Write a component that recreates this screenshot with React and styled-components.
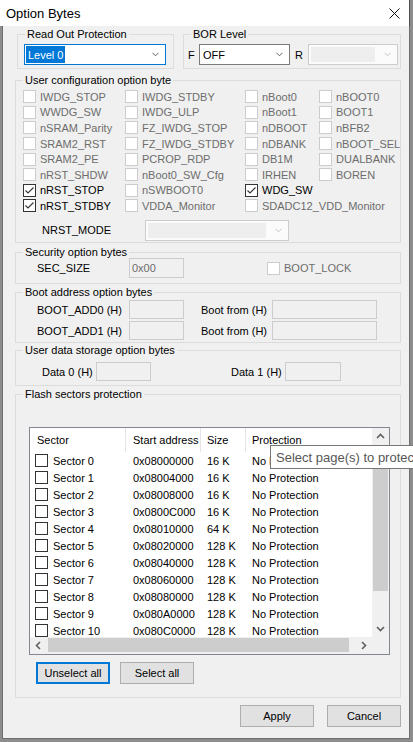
import React from 'react';
import styled, { createGlobalStyle } from 'styled-components';

const Global = createGlobalStyle`
  html, body { margin: 0; padding: 0; overflow: hidden; background: #8a8a8a; }
  body { font-family: "Liberation Sans", Arial, sans-serif; font-size: 11px; color: #000; }
  * { box-sizing: border-box; }
`;

const Frame = styled.div`
  width: 413px; height: 742px; overflow: hidden; position: relative;
  background: #8d8d8d;
  display: flex; flex-direction: column;
`;

const TitleBar = styled.div`
  width: 410px; height: 26px; flex: none;
  background: #fff;
  border-right: 1px solid #4d4d4d;
  display: flex; align-items: center; justify-content: space-between;
  padding: 0 9px 0 6px;
  font-size: 13px;
`;

const Window = styled.div`
  margin-left: 2px; width: 408px; height: 713px; flex: none;
  background: #f0f0f0;
  border: 1px solid #6e6e6e; border-top: none;
  padding: 2px 8px 0 12px;
  display: flex; flex-direction: column;
`;

const Group = styled.fieldset`
  margin: ${p => p.$mt || 0}px 0 0 ${p => (p.$ml === 'auto' ? 'auto' : `${p.$ml || 0}px`)};
  padding: 0;
  border: 1px solid #dcdcdc;
  height: ${p => p.$h}px;
  width: ${p => (p.$w ? `${p.$w}px` : 'auto')};
  min-width: 0;
  flex: none;
`;

const Caption = styled.legend`
  margin-left: 7px; padding: 0 2px; line-height: 12px; font-size: 11px; color: #000;
`;

const TopRow = styled.div`
  display: flex; align-items: flex-start;
`;

const Row = styled.div`
  display: flex; align-items: center;
  margin: ${p => p.$mt || 0}px 0 0 ${p => p.$ml || 0}px;
  height: ${p => p.$h || 21}px;
`;

const Label = styled.span`
  width: ${p => p.$w}px; flex: none; white-space: nowrap;
  margin-left: ${p => p.$ml || 0}px;
  color: ${p => (p.$disabled ? '#6d6d6d' : '#000')};
`;

const ComboBox = styled.div`
  width: ${p => p.$w}px; height: 21px; flex: none;
  display: flex; align-items: center;
  background: ${p => (p.$disabled ? '#fbfbfb' : '#fff')};
  border: 1px solid ${p => (p.$focus ? '#0078d7' : p.$disabled ? '#cccccc' : '#7a7a7a')};
  padding: 1px 6px 1px 1px;
`;

const ComboValue = styled.span`
  height: 17px; display: flex; align-items: center; padding: 0 2px;
  background: ${p => (p.$selected ? '#0078d7' : 'transparent')};
  color: ${p => (p.$selected ? '#fff' : '#000')};
  margin-right: auto;
`;

const ComboField = styled.span`
  align-self: stretch; flex: 1; margin: 1px 9px 1px 1px; background: #eeeeee;
`;

const Chevron = ({ color = '#555' }) => (
  <svg width="7" height="5" viewBox="0 0 7 5" style={{ flex: 'none' }}>
    <polyline points="0.5,0.8 3.5,3.8 6.5,0.8" fill="none" stroke={color} strokeWidth="1" />
  </svg>
);

const Combo = ({ w, value, focus, selected, disabled }) => (
  <ComboBox $w={w} $focus={focus} $disabled={disabled}>
    {disabled ? <ComboField /> : <ComboValue $selected={selected}>{value}</ComboValue>}
    <Chevron color={disabled ? '#c4c4c4' : '#606060'} />
  </ComboBox>
);

const Box = styled.span`
  width: 13px; height: 13px; flex: none;
  border: 1px solid ${p => (p.$disabled ? '#cccccc' : '#333333')};
  background: #fff;
  display: flex; align-items: center; justify-content: center;
`;

const Check = ({ checked, disabled }) => (
  <Box $disabled={disabled}>
    {checked && (
      <svg width="11" height="11" viewBox="0 0 11 11">
        <polyline points="1.5,5.5 4,8 9.5,2.5" fill="none" stroke="#333" strokeWidth="1.1" />
      </svg>
    )}
  </Box>
);

const CheckItem = styled.label`
  display: flex; align-items: center; gap: 4px; white-space: nowrap;
  margin-left: ${p => p.$ml || 0}px;
  color: ${p => (p.$disabled ? '#6d6d6d' : '#000')};
`;

const OptionGrid = styled.div`
  display: grid;
  grid-template-columns: 102px 120px 74px 1fr;
  grid-template-rows: repeat(8, 15.6px);
  grid-auto-flow: column;
  align-items: center;
  margin: 3px 0 0 7px;
`;

const TextBox = styled.div`
  width: ${p => p.$w}px; height: ${p => p.$h || 19}px; flex: none;
  border: 1px solid #cccccc; background: #f0f0f0; color: #6d6d6d;
  padding-left: 2px; display: flex; align-items: center;
`;

const FieldRows = styled.div`
  display: flex; flex-direction: column; gap: 2px; margin-top: 2px;
`;

const ListBox = styled.div`
  position: relative;
  margin: 27px 0 0 13px;
  width: 361px; height: 228px;
  border: 1px solid #828790;
  background: #fff;
  display: grid;
  grid-template-columns: 1fr 17px;
  grid-template-rows: 1fr 17px;
`;

const ListContent = styled.div`
  overflow: hidden; display: flex; flex-direction: column;
`;

const HeaderRow = styled.div`
  display: grid; grid-template-columns: 96px 75px 45px 1fr; height: 24px; flex: none;
`;

const HeadCell = styled.div`
  display: flex; align-items: center; padding-left: ${p => p.$pl || 6}px;
  border-right: ${p => (p.$last ? 'none' : '1px solid #e5e5e5')};
  white-space: nowrap;
`;

const Rows = styled.div`
  flex: 1; overflow: hidden;
`;

const SectorRow = styled.div`
  display: grid; grid-template-columns: 96px 75px 45px 1fr; height: 17px;
  align-items: center; white-space: nowrap;
`;

const Cell = styled.div`
  display: flex; align-items: center; gap: 5px; padding-left: ${p => p.$pl || 6}px;
`;

const VScroll = styled.div`
  background: #f0f0f0; display: flex; flex-direction: column;
`;

const HScroll = styled.div`
  background: #f0f0f0; display: flex; align-items: center;
`;

const ScrollBtn = styled.div`
  width: 17px; height: 17px; flex: none;
  display: flex; align-items: center; justify-content: center;
`;

const Track = styled.div`
  flex: 1; display: flex; flex-direction: ${p => (p.$vertical ? 'column' : 'row')};
  align-self: stretch;
`;

const Thumb = styled.div`
  background: #cdcdcd;
  ${p => (p.$vertical
    ? `height: ${p.$size}px; margin: 0 1px;`
    : `width: ${p.$size}px; margin: 1px 0 2px 1px;`)}
`;

const Corner = styled.div`
  background: #f0f0f0;
`;

const Arrow = ({ dir }) => {
  const rot = { up: 0, down: 180, left: 270, right: 90 }[dir];
  return (
    <svg width="9" height="9" viewBox="0 0 9 9" style={{ transform: `rotate(${rot}deg)` }}>
      <polyline points="1,6 4.5,2.5 8,6" fill="none" stroke="#606060" strokeWidth="1.6" />
    </svg>
  );
};

const Tooltip = styled.div`
  position: absolute; left: 240px; top: 17px; z-index: 2;
  width: 170px; height: 24px;
  border: 1px solid #767676; background: #fff;
  color: #575757; font-size: 13px;
  display: flex; align-items: center; padding-left: 5px; white-space: nowrap;
`;

const Button = styled.button`
  width: 74px; height: 22px; flex: none; margin: 0;
  font-family: "Liberation Sans", Arial, sans-serif; font-size: 11px; color: #000;
  background: #e1e1e1;
  border: ${p => (p.$focus ? '2px solid #0078d7' : '1px solid #adadad')};
  padding: 0;
`;

const ButtonRow = styled.div`
  display: flex; gap: ${p => p.$gap}px;
  justify-content: ${p => (p.$end ? 'flex-end' : 'flex-start')};
  margin: ${p => p.$mt}px 0 0 ${p => p.$ml || 0}px;
`;

const options = [
  ['IWDG_STOP', 1, 0], ['WWDG_SW', 1, 0], ['nSRAM_Parity', 1, 0], ['SRAM2_RST', 1, 0],
  ['SRAM2_PE', 1, 0], ['nRST_SHDW', 1, 0], ['nRST_STOP', 0, 1], ['nRST_STDBY', 0, 1],
  ['IWDG_STDBY', 1, 0], ['IWDG_ULP', 1, 0], ['FZ_IWDG_STOP', 1, 0], ['FZ_IWDG_STDBY', 1, 0],
  ['PCROP_RDP', 1, 0], ['nBoot0_SW_Cfg', 1, 0], ['nSWBOOT0', 1, 0], ['VDDA_Monitor', 1, 0],
  ['nBoot0', 1, 0], ['nBoot1', 1, 0], ['nDBOOT', 1, 0], ['nDBANK', 1, 0],
  ['DB1M', 1, 0], ['IRHEN', 1, 0], ['WDG_SW', 0, 1], ['SDADC12_VDD_Monitor', 1, 0],
  ['nBOOT0', 1, 0], ['BOOT1', 1, 0], ['nBFB2', 1, 0], ['nBOOT_SEL', 1, 0],
  ['DUALBANK', 1, 0], ['BOREN', 1, 0],
];

const sectors = [
  ['0x08000000', '16 K'], ['0x08004000', '16 K'], ['0x08008000', '16 K'], ['0x0800C000', '16 K'],
  ['0x08010000', '64 K'], ['0x08020000', '128 K'], ['0x08040000', '128 K'], ['0x08060000', '128 K'],
  ['0x08080000', '128 K'], ['0x080A0000', '128 K'], ['0x080C0000', '128 K'],
];

export default function App() {
  return (
    <Frame>
      <Global />
      <TitleBar>
        <span>Option Bytes</span>
        <svg width="11" height="11" viewBox="0 0 11 11">
          <path d="M0.5 0.5 L10.5 10.5 M10.5 0.5 L0.5 10.5" stroke="#111" strokeWidth="1" />
        </svg>
      </TitleBar>
      <Window>
        <TopRow>
          <Group $w={157} $ml={2} $h={41}>
            <Caption>Read Out Protection</Caption>
            <Row $mt={4} $ml={6}>
              <Combo w={142} value="Level 0" focus selected />
            </Row>
          </Group>
          <Group $w={218} $ml="auto" $h={41}>
            <Caption>BOR Level</Caption>
            <Row $mt={4} $ml={4}>
              <Label $w={11}>F</Label>
              <Combo w={91} value="OFF" />
              <Label $w={13} $ml={5}>R</Label>
              <Combo w={90} disabled />
            </Row>
          </Group>
        </TopRow>

        <Group $mt={5} $h={169}>
          <Caption>User configuration option byte</Caption>
          <OptionGrid>
            {options.map(([name, disabled, checked]) => (
              <CheckItem key={name} $disabled={!!disabled}>
                <Check disabled={!!disabled} checked={!!checked} />
                {name}
              </CheckItem>
            ))}
          </OptionGrid>
          <Row $mt={6} $ml={26}>
            <Label $w={103}>NRST_MODE</Label>
            <Combo w={144} disabled />
          </Row>
        </Group>

        <Group $mt={3} $h={38}>
          <Caption>Security option bytes</Caption>
          <Row $ml={21} $h={20}>
            <Label $w={92}>SEC_SIZE</Label>
            <TextBox $w={55} $h={20}>0x00</TextBox>
            <CheckItem $disabled $ml={83}>
              <Check disabled />
              BOOT_LOCK
            </CheckItem>
          </Row>
        </Group>

        <Group $mt={2} $h={57}>
          <Caption>Boot address option bytes</Caption>
          <FieldRows>
            <Row $ml={21} $h={19}>
              <Label $w={92}>BOOT_ADD0 (H)</Label>
              <TextBox $w={55} />
              <Label $w={71} $ml={17}>Boot from (H)</Label>
              <TextBox $w={105} />
            </Row>
            <Row $ml={21} $h={19}>
              <Label $w={92}>BOOT_ADD1 (H)</Label>
              <TextBox $w={55} />
              <Label $w={71} $ml={17}>Boot from (H)</Label>
              <TextBox $w={105} />
            </Row>
          </FieldRows>
        </Group>

        <Group $mt={1} $h={42}>
          <Caption>User data storage option bytes</Caption>
          <Row $mt={6} $ml={26} $h={19}>
            <Label $w={54}>Data 0 (H)</Label>
            <TextBox $w={55} />
            <Label $w={54} $ml={80}>Data 1 (H)</Label>
            <TextBox $w={56} />
          </Row>
        </Group>

        <Group $mt={2} $h={310}>
          <Caption>Flash sectors protection</Caption>
          <ListBox>
            <ListContent>
              <HeaderRow>
                <HeadCell $pl={7}>Sector</HeadCell>
                <HeadCell $pl={7}>Start address</HeadCell>
                <HeadCell>Size</HeadCell>
                <HeadCell $last>Protection</HeadCell>
              </HeaderRow>
              <Rows>
                {sectors.map(([addr, size], i) => (
                  <SectorRow key={addr}>
                    <Cell $pl={5}>
                      <Check />
                      {`Sector ${i}`}
                    </Cell>
                    <Cell $pl={7}>{addr}</Cell>
                    <Cell>{size}</Cell>
                    <Cell>No Protection</Cell>
                  </SectorRow>
                ))}
              </Rows>
            </ListContent>
            <VScroll>
              <ScrollBtn><Arrow dir="up" /></ScrollBtn>
              <Track $vertical>
                <Thumb $vertical $size={146} />
              </Track>
              <ScrollBtn><Arrow dir="down" /></ScrollBtn>
            </VScroll>
            <HScroll>
              <ScrollBtn><Arrow dir="left" /></ScrollBtn>
              <Track>
                <Thumb $size={301} />
              </Track>
              <ScrollBtn><Arrow dir="right" /></ScrollBtn>
            </HScroll>
            <Corner />
            <Tooltip>Select page(s) to protect</Tooltip>
          </ListBox>
          <ButtonRow $mt={7} $ml={20} $gap={10}>
            <Button $focus>Unselect all</Button>
            <Button>Select all</Button>
          </ButtonRow>
        </Group>

        <ButtonRow $mt={7} $gap={13} $end>
          <Button>Apply</Button>
          <Button>Cancel</Button>
        </ButtonRow>
      </Window>
    </Frame>
  );
}
